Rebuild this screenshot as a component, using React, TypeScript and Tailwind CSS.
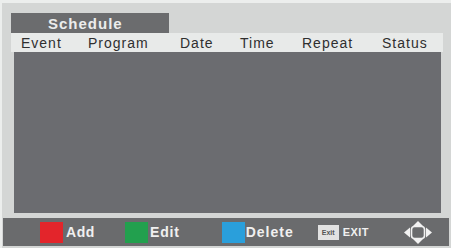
import React from 'react';

const columns = [
  { label: 'Event', w: 'w-[67px]' },
  { label: 'Program', w: 'w-[92px]' },
  { label: 'Date', w: 'w-[60px]' },
  { label: 'Time', w: 'w-[62px]' },
  { label: 'Repeat', w: 'w-[80px]' },
  { label: 'Status', w: 'w-[60px]' },
];

const NavIcon = () => (
  <svg width="28" height="23" viewBox="0 0 28 23">
    <rect x="7.5" y="5.5" width="13" height="12" rx="3" fill="none" stroke="#f2f2f2" strokeWidth="1.6" />
    <polygon points="14,0 9,5 19,5" fill="#f2f2f2" />
    <polygon points="14,23 9,18 19,18" fill="#f2f2f2" />
    <polygon points="0,11.5 6,6.5 6,16.5" fill="#f2f2f2" />
    <polygon points="28,11.5 22,6.5 22,16.5" fill="#f2f2f2" />
  </svg>
);

export default function App() {
  return (
    <div
      className="w-[451px] h-[248px] bg-[#d4d6d5] flex flex-col border-t-[3px] border-l-[2px] border-[#eceeed] overflow-hidden"
      style={{ fontFamily: '"Liberation Sans", Arial, sans-serif' }}
    >
      {/* Schedule panel */}
      <div className="pt-[10px] pl-[9px] pr-[8px]">
        <div className="w-[158px] h-[20px] bg-[#6b6c6e] pl-[37px] flex items-center">
          <span className="text-[15px] font-bold tracking-[1px] text-[#ececec] leading-none">Schedule</span>
        </div>
        <div className="h-[19px] bg-[#e8eae9] flex items-center pl-[10px]">
          {columns.map((c) => (
            <span key={c.label} className={`${c.w} shrink-0 text-[14px] tracking-[1px] text-[#2f2f2f] leading-none`}>
              {c.label}
            </span>
          ))}
        </div>
        <div className="ml-[3px] mr-[2px] h-[161px] bg-[#6b6c70]" />
      </div>

      {/* Bottom hint bar */}
      <div className="mt-[5px] ml-[1px] mr-[2px] h-[28px] bg-[#6a6b6d] flex items-center pl-[37px] text-[14px] font-bold text-[#f0f0f0] leading-none">
        <span className="w-[23px] h-[21px] bg-[#e3252b]" />
        <span className="ml-[3px] tracking-[0.6px]">Add</span>
        <span className="ml-[30px] w-[23px] h-[21px] bg-[#22a04e]" />
        <span className="ml-[2px] tracking-[0.8px]">Edit</span>
        <span className="ml-[42px] w-[23px] h-[21px] bg-[#2a9fdb]" />
        <span className="ml-[1px] tracking-[1px]">Delete</span>
        <span className="ml-[24px] w-[21px] h-[15px] bg-[#e2e2e2] flex items-center justify-center">
          <span className="text-[7px] font-bold text-[#555] leading-none">Exit</span>
        </span>
        <span className="ml-[4px] text-[11px] tracking-[0.4px]">EXIT</span>
        <span className="ml-[35px] flex items-center">
          <NavIcon />
        </span>
      </div>
    </div>
  );
}
